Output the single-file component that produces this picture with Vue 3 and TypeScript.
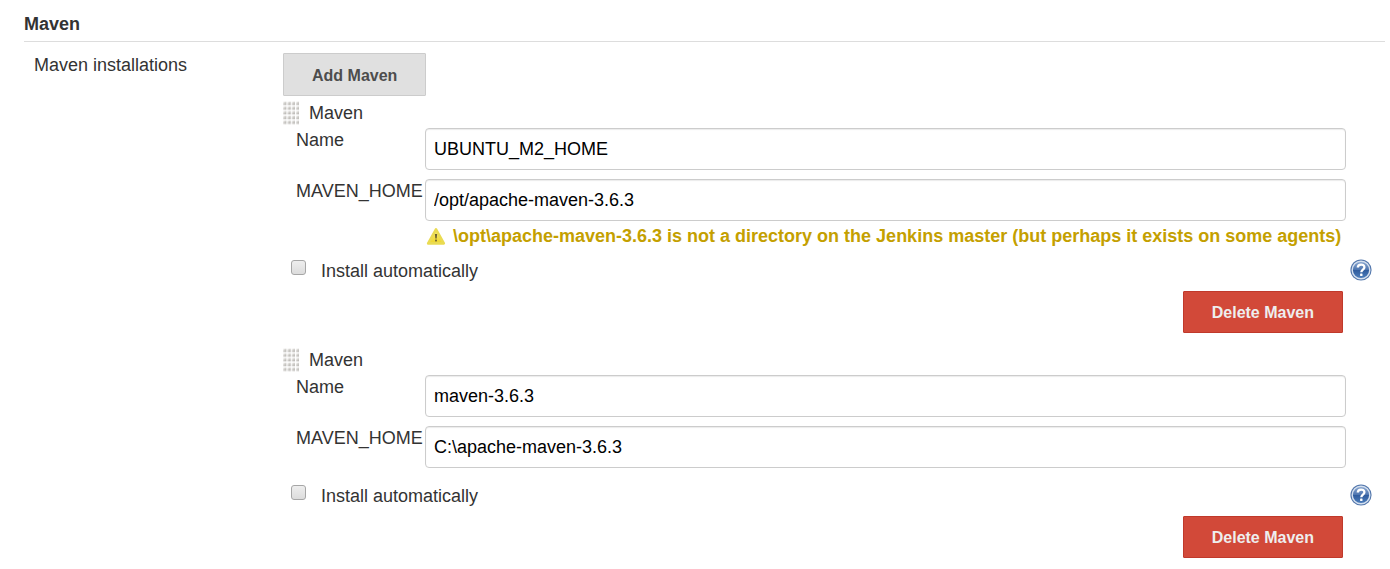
<script setup lang="ts">
import { ref } from 'vue'

interface Installation {
  id: number
  name: string
  home: string
  warning: string
  auto: boolean
}

const installations = ref<Installation[]>([
  {
    id: 1,
    name: 'UBUNTU_M2_HOME',
    home: '/opt/apache-maven-3.6.3',
    warning:
      '\\opt\\apache-maven-3.6.3 is not a directory on the Jenkins master (but perhaps it exists on some agents)',
    auto: false,
  },
  { id: 2, name: 'maven-3.6.3', home: 'C:\\apache-maven-3.6.3', warning: '', auto: false },
])

let nextId = 3

function add(): void {
  installations.value.push({ id: nextId++, name: '', home: '', warning: '', auto: false })
}

function remove(id: number): void {
  installations.value = installations.value.filter((item) => item.id !== id)
}
</script>

<template>
  <main class="section">
    <h2 class="title">Maven</h2>
    <div class="setting">
      <div class="setting-label">Maven installations</div>
      <div class="setting-body">
        <button class="button" type="button" @click="add">Add Maven</button>

        <section v-for="item in installations" :key="item.id" class="item">
          <header class="item-head">
            <svg class="grip" viewBox="0 0 16 24" aria-hidden="true">
              <defs>
                <linearGradient :id="`dot-${item.id}`" x1="0" y1="0" x2="1" y2="1">
                  <stop offset="0.1" stop-color="#f4f3f1" />
                  <stop offset="1" stop-color="#a3a19c" />
                </linearGradient>
                <pattern :id="`grip-${item.id}`" width="4.3" height="4.7" patternUnits="userSpaceOnUse">
                  <rect x="0.1" y="0.6" width="3.2" height="3.4" :fill="`url(#dot-${item.id})`" />
                </pattern>
              </defs>
              <rect width="16" height="24" :fill="`url(#grip-${item.id})`" />
            </svg>
            <span>Maven</span>
          </header>

          <div class="fields">
            <label class="field-label" :for="`name-${item.id}`">Name</label>
            <input :id="`name-${item.id}`" v-model="item.name" class="text" type="text" />
            <label class="field-label" :for="`home-${item.id}`">MAVEN_HOME</label>
            <input :id="`home-${item.id}`" v-model="item.home" class="text" type="text" />
          </div>

          <div v-if="item.warning" class="warning">
            <svg class="warning-icon" viewBox="0 0 20 20" aria-hidden="true">
              <defs>
                <linearGradient :id="`warn-${item.id}`" x1="0" y1="0" x2="0" y2="1">
                  <stop offset="0" stop-color="#f8ee8c" />
                  <stop offset="0.55" stop-color="#f3e04a" />
                  <stop offset="1" stop-color="#efd62c" />
                </linearGradient>
              </defs>
              <path
                d="M10 3.4 L17.8 17.4 H2.2 Z"
                :fill="`url(#warn-${item.id})`"
                stroke="#eadb52"
                stroke-width="2.6"
                stroke-linejoin="round"
              />
              <path d="M8.9 8 h2.2 l-0.4 4.6 h-1.4 z" fill="#6b6130" />
              <rect x="9.1" y="13.6" width="1.8" height="1.8" fill="#6b6130" />
            </svg>
            <span>{{ item.warning }}</span>
          </div>

          <div class="options" :class="{ 'after-warning': item.warning }">
            <label class="check-label">
              <input v-model="item.auto" class="check" type="checkbox" />
              <span>Install automatically</span>
            </label>
            <button class="help" type="button" aria-label="Help for Install automatically">
              <svg class="help-icon" viewBox="0 0 22 22" aria-hidden="true">
                <defs>
                  <linearGradient :id="`help-${item.id}`" x1="0" y1="0" x2="0" y2="1">
                    <stop offset="0" stop-color="#8fabd2" />
                    <stop offset="0.48" stop-color="#4d75b0" />
                    <stop offset="0.52" stop-color="#2f5c9e" />
                    <stop offset="1" stop-color="#4f80bd" />
                  </linearGradient>
                </defs>
                <circle cx="11" cy="11" r="10.6" fill="#5377ac" />
                <circle cx="11" cy="11" r="8.8" :fill="`url(#help-${item.id})`" stroke="#d5e0ef" stroke-width="1.4" />
                <path
                  d="M7.8 8.6 C7.8 4.6 14.4 4.6 14.4 8.2 C14.4 10.6 11.3 10.6 11.3 13.2"
                  fill="none"
                  stroke="#fff"
                  stroke-width="2.3"
                />
                <rect x="10.1" y="14.6" width="2.4" height="2.4" rx="0.5" fill="#fff" />
              </svg>
            </button>
          </div>

          <div class="actions">
            <button class="button danger" type="button" @click="remove(item.id)">Delete Maven</button>
          </div>
        </section>
      </div>
    </div>
  </main>
</template>

<style>
body {
  background: #fff;
}
</style>

<style scoped>
.section {
  padding: 12px 5px 10px 24px;
  font-family: "Liberation Sans", Arial, sans-serif;
  font-size: 18px;
  line-height: 24px;
  color: #333;
}

.title {
  margin: 0;
  padding-bottom: 5px;
  border-bottom: 1px solid #ddd;
  font-size: 18px;
  line-height: 24px;
  font-weight: bold;
}

.setting {
  display: grid;
  grid-template-columns: 249px minmax(0, 1fr);
  padding: 11px 13px 0 10px;
}

.button {
  display: block;
  height: 43px;
  padding: 2px 28px 0;
  border: 1px solid #ccc;
  border-radius: 1px;
  background: #e0e0e0;
  color: #4d4d4d;
  font-family: inherit;
  font-size: 16px;
  font-weight: bold;
  cursor: pointer;
}

.danger {
  height: 42px;
  border-color: #c0392b;
  background: #d24939;
  color: #eee;
}

.item {
  padding: 5px 0 10px;
}

.item-head {
  display: flex;
  gap: 10px;
  height: 27px;
}

.grip {
  width: 16px;
  height: 24px;
}

.fields {
  display: grid;
  grid-template-columns: 129px minmax(0, 1fr);
  row-gap: 9px;
  padding: 0 26px 0 13px;
}

.field-label {
  white-space: nowrap;
}

.text {
  box-sizing: border-box;
  width: 100%;
  height: 42px;
  padding: 0 8px;
  border: 1px solid #ccc;
  border-radius: 4px;
  box-shadow: inset 0 1px 1px rgba(0, 0, 0, 0.08);
  background: #fff;
  color: #000;
  font-family: inherit;
  font-size: 18px;
}

.warning {
  display: flex;
  align-items: center;
  gap: 7px;
  padding: 5px 0 0 143px;
  color: #c4a000;
  font-size: 18px;
  font-weight: bold;
  line-height: 20px;
}

.warning-icon {
  flex: none;
  width: 20px;
  height: 20px;
}

.options {
  display: flex;
  justify-content: space-between;
  align-items: center;
  height: 22px;
  margin-top: 17px;
}

.after-warning {
  margin-top: 14px;
}

.check-label {
  display: flex;
  align-items: center;
  gap: 15px;
  padding-left: 8px;
}

.check {
  appearance: none;
  box-sizing: border-box;
  width: 15px;
  height: 15px;
  margin: 0 0 7px;
  border: 1px solid #a6a6a6;
  border-radius: 3px;
  background: linear-gradient(#eee, #dcdcdc);
}

.check:checked {
  background: #4d75b0;
}

.help {
  padding: 0 0 2px;
  border: 0;
  background: none;
  cursor: pointer;
}

.help-icon {
  display: block;
  width: 22px;
  height: 22px;
}

.actions {
  display: flex;
  justify-content: flex-end;
  padding: 9px 29px 0 0;
}
</style>
